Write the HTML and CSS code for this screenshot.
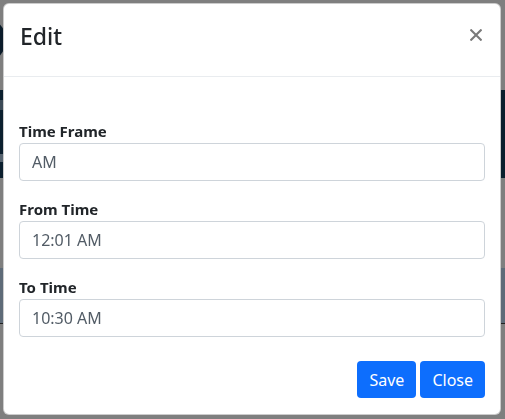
FILE: index.html
```html
<!DOCTYPE html>
<html lang="en">
<head>
    <meta charset="UTF-8">
    <meta name="viewport" content="width=device-width, initial-scale=1.0">
    <title>Edit Time Frame</title>
    <link rel="stylesheet" href="styles.css">
</head>
<body>
    <!-- page behind the dialog (dimmed) -->
    <div class="page">
        <div class="topbar">
            <span class="logo"></span>
        </div>
        <div class="hero">
            <span class="hero-mark"></span>
            <span class="hero-line"></span>
        </div>
        <div class="gap"></div>
        <div class="strip"></div>
    </div>

    <div class="modal">
        <div class="modal-content">
            <div class="modal-header">
                <h4 class="modal-title">Edit</h4>
                <button type="button" class="close" aria-label="Close">
                    <svg width="12" height="12" viewBox="0 0 12 12">
                        <path d="M1.2 1.2L10.8 10.8M10.8 1.2L1.2 10.8" stroke="currentColor" stroke-width="2.1" stroke-linecap="square"/>
                    </svg>
                </button>
            </div>

            <form class="modal-body">
                <div class="form-group">
                    <label for="time_frame">Time Frame</label>
                    <input type="text" id="time_frame" class="form-control" value="AM">
                </div>
                <div class="form-group">
                    <label for="from_time">From Time</label>
                    <input type="text" id="from_time" class="form-control" value="12:01 AM">
                </div>
                <div class="form-group">
                    <label for="to_time">To Time</label>
                    <input type="text" id="to_time" class="form-control" value="10:30 AM">
                </div>
            </form>

            <div class="modal-footer">
                <button type="button" class="btn btn-primary">Save</button>
                <button type="button" class="btn btn-primary">Close</button>
            </div>
        </div>
    </div>
</body>
</html>
```

FILE: styles.css
```css
body {
    margin: 0;
    padding: 0;
    background-color: #7f7f7f;
    font-family: 'Noto Sans', 'Open Sans', sans-serif;
    color: #212529;
    overflow: hidden;
}
/* dimmed page underneath */
.topbar {
    height: 90px;
    display: flex;
    align-items: center;
}
.logo {
    width: 46px;
    height: 46px;
    border-radius: 50%;
    background-color: #0b1c2a;
    margin-left: -40px;
    margin-top: -10px;
}
.hero {
    height: 88px;
    background-color: #0b1f2e;
    display: flex;
    flex-direction: column;
    padding-top: 10px;
    box-sizing: border-box;
    gap: 44px;
}
.hero-mark {
    width: 3px;
    height: 10px;
    background-color: #3c4a57;
}
.hero-line {
    width: 3px;
    height: 8px;
    background-color: #56636f;
}
.gap {
    height: 90px;
}
.strip {
    height: 55px;
    background-color: #5e6b78;
    border-bottom: 1px solid #222;
}
/* dialog */
.modal {
    position: fixed;
    top: 0;
    left: 0;
    right: 0;
    bottom: 0;
    padding: 3px 0 0 3px;
}
.modal-content {
    width: 498px;
    height: 412px;
    box-sizing: border-box;
    background-color: #fff;
    border: 1px solid rgba(0, 0, 0, 0.2);
    border-radius: 6px;
    display: flex;
    flex-direction: column;
}
.modal-header {
    display: flex;
    align-items: center;
    justify-content: space-between;
    padding: 12px 15px 20px 16px;
    border-bottom: 1px solid #e9ecef;
}
.modal-title {
    margin: 0;
    font-size: 23px;
    font-weight: 500;
    line-height: 40px;
}
.close {
    background: transparent;
    border: none;
    padding: 0;
    margin-right: 3px;
    margin-top: -3px;
    color: #7a7a7a;
    display: flex;
    cursor: pointer;
}
.modal-body {
    padding: 44px 15px 0;
    margin: 0;
}
.form-group {
    margin-bottom: 18px;
}
.form-group label {
    display: block;
    font-size: 15px;
    font-weight: 700;
    line-height: 20px;
    margin-bottom: 2px;
}
.form-control {
    width: 100%;
    height: 38px;
    padding: 0 12px;
    border: 1px solid #ced4da;
    border-radius: 4px;
    font-family: inherit;
    font-size: 16px;
    color: #525c66;
    box-sizing: border-box;
}
.modal-footer {
    display: flex;
    justify-content: flex-end;
    gap: 4px;
    padding: 6px 15px 0;
}
.btn {
    height: 37px;
    padding: 0 12px;
    border: none;
    border-radius: 4px;
    font-family: inherit;
    font-size: 16px;
    cursor: pointer;
}
.btn-primary {
    background-color: #0d6efd;
    color: #fff;
}
```
